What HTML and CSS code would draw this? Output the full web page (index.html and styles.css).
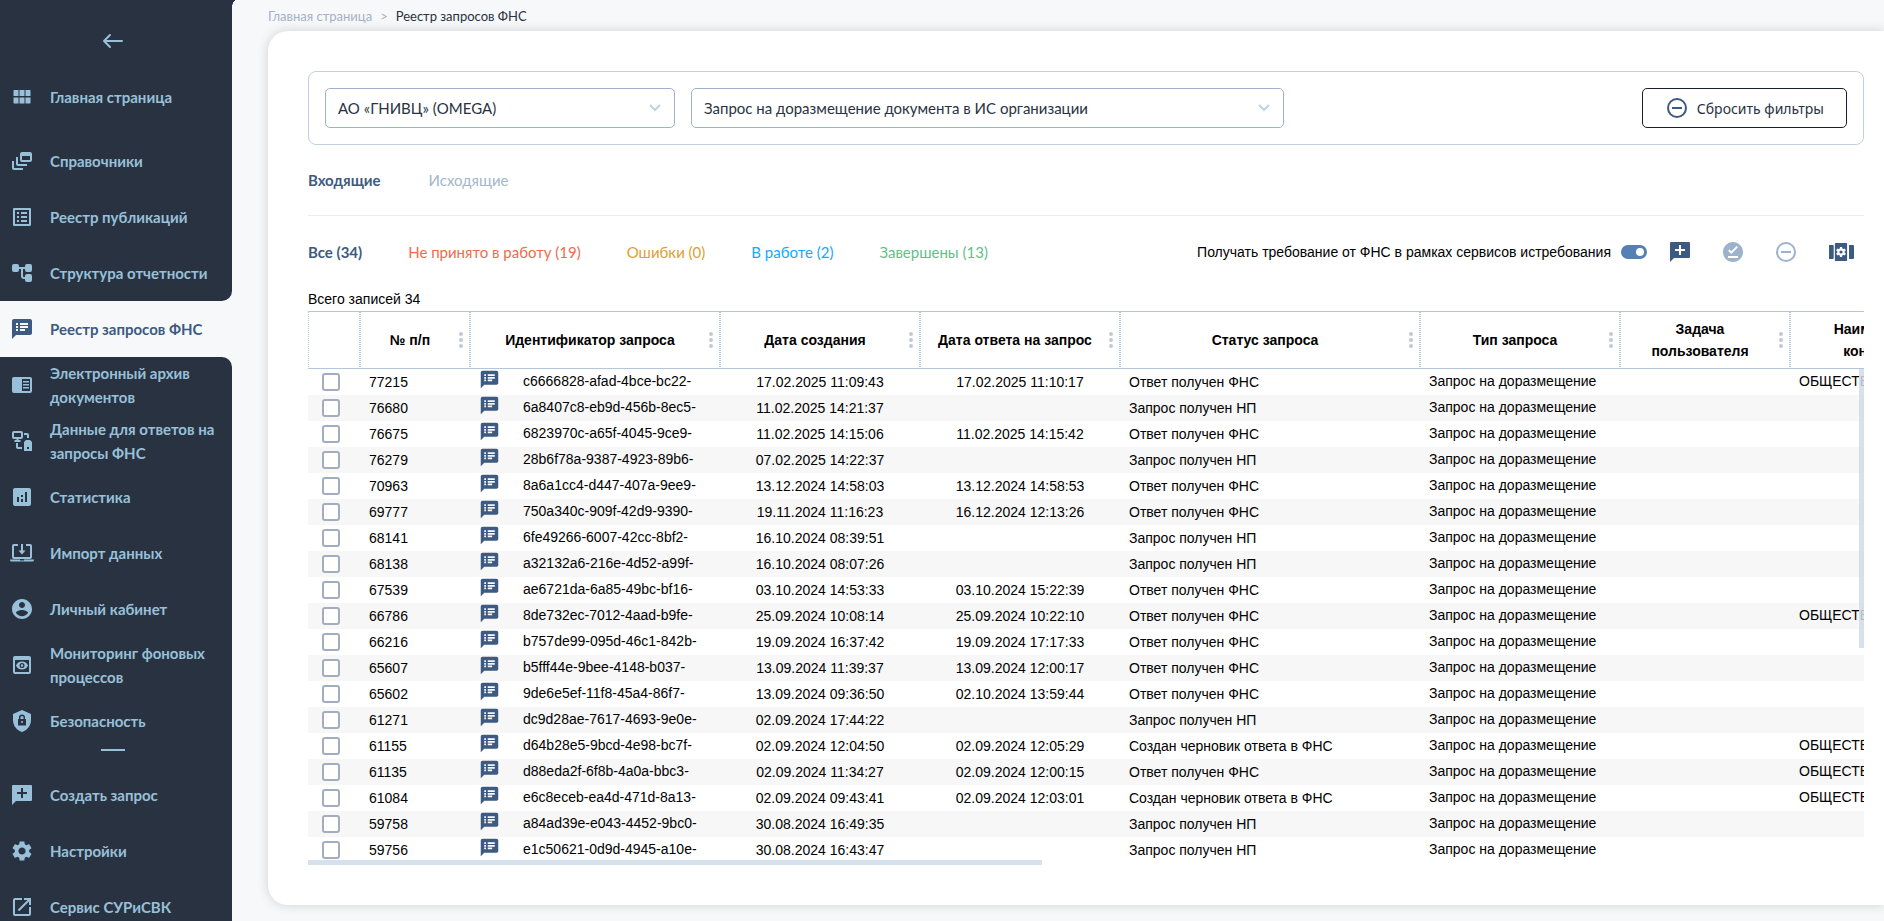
FILE: index.html
```html
<!DOCTYPE html>
<html lang="ru">
<head>
    <meta charset="UTF-8">
    <meta name="viewport" content="width=device-width, initial-scale=1.0">
    <title>Реестр запросов ФНС</title>
    <link rel="stylesheet" href="styles.css">
</head>
<body>
    <!-- Icon sprite -->
    <svg class="sprite" aria-hidden="true">
        <symbol id="i-back" viewBox="0 0 24 24"><path d="M21 12H3M9 6l-6 6 6 6" fill="none" stroke="currentColor" stroke-width="2" stroke-linecap="round" stroke-linejoin="round"/></symbol>
        <symbol id="i-grid" viewBox="0 0 24 24"><path d="M4 5h4.500v6H3.500V5.500zM9.500 5h5v6h-5zM15.500 5h4.500l.5.5V11h-5zM3.500 12.500h5v6H4l-.5-.5zM9.500 12.500h5v6h-5zM15.500 12.500h5V18l-.5.5h-4.500z"/></symbol>
        <symbol id="i-feed" viewBox="0 0 24 24"><path d="M8 8H6v7c0 1.100.9 2 2 2h9v-2H8V8zM20 3h-8c-1.100 0-2 .9-2 2v6c0 1.100.9 2 2 2h8c1.100 0 2-.9 2-2V5c0-1.100-.9-2-2-2zm0 8h-8V7h8v4zM4 12H2v7c0 1.100.9 2 2 2h9v-2H4v-7z"/></symbol>
        <symbol id="i-list" viewBox="0 0 24 24"><path d="M19 5v14H5V5h14m1.100-2H3.900c-.5 0-.9.4-.9.9v16.200c0 .4.4.9.9.9h16.200c.4 0 .9-.5.9-.9V3.900c0-.5-.5-.9-.9-.9zM11 7h6v2h-6V7zm0 4h6v2h-6v-2zm0 4h6v2h-6zM7 7h2v2H7zm0 4h2v2H7zm0 4h2v2H7z"/></symbol>
        <symbol id="i-tree" viewBox="0 0 24 24"><rect x="2" y="3" width="7" height="8" rx="2"/><rect x="15" y="3" width="7" height="8" rx="2"/><rect x="15" y="13" width="7" height="8" rx="2"/><path d="M8 7h8M12 7v8a2 2 0 0 0 2 2h2" fill="none" stroke="currentColor" stroke-width="2"/></symbol>
        <symbol id="i-notes" viewBox="0 0 24 24"><path d="M20 2H4c-1.100 0-2 .9-2 2v18l4-4h14c1.100 0 2-.9 2-2V4c0-1.100-.9-2-2-2zM8 14H6v-2h2v2zm0-3H6V9h2v2zm0-3H6V6h2v2zm7 6h-5v-2h5v2zm3-3h-8V9h8v2zm0-3h-8V6h8v2z"/></symbol>
        <symbol id="i-reader" viewBox="0 0 24 24"><path d="M20 4H4a2 2 0 0 0-2 2v12a2 2 0 0 0 2 2h16a2 2 0 0 0 2-2V6a2 2 0 0 0-2-2zm0 14h-8V6h8zM13 8h6v1.500h-6zM13 11h6v1.500h-6zM13 14h6v1.500h-6z"/></symbol>
        <symbol id="i-devices" viewBox="0 0 24 24"><g fill="none" stroke="currentColor" stroke-width="2"><rect x="3" y="3" width="9" height="6" rx="1"/><path d="M7.500 9v3M4.500 12h6M14 5h3a1 1 0 0 1 1 1v3M7 14v4a1 1 0 0 0 1 1h4"/></g><path fill-rule="evenodd" d="M14 22V13l2-2h4l2 2v9zM17 18v2h2v-2z"/></symbol>
        <symbol id="i-stat" viewBox="0 0 24 24"><path d="M19 3H5c-1.100 0-2 .9-2 2v14c0 1.100.9 2 2 2h14c1.100 0 2-.9 2-2V5c0-1.100-.9-2-2-2zM9 17H7v-5h2v5zm4 0h-2v-3h2v3zm0-5h-2v-2h2v2zm4 5h-2V7h2v10z"/></symbol>
        <symbol id="i-import" viewBox="0 0 24 24"><g fill="none" stroke="currentColor" stroke-width="2"><path d="M8 4H4a1 1 0 0 0-1 1v11a1 1 0 0 0 1 1h16a1 1 0 0 0 1-1V5a1 1 0 0 0-1-1h-4M12 3v8"/></g><path d="M8.500 9.500h7L12 13.500zM0 18.500h10v1h4v-1h10v.5a1.500 1.500 0 0 1-1.500 1.500h-21A1.500 1.500 0 0 1 0 19z"/></symbol>
        <symbol id="i-user" viewBox="0 0 24 24"><path d="M12 2C6.480 2 2 6.480 2 12s4.480 10 10 10 10-4.480 10-10S17.520 2 12 2zm0 3c1.660 0 3 1.340 3 3s-1.340 3-3 3-3-1.340-3-3 1.340-3 3-3zm0 14.200c-2.500 0-4.710-1.280-6-3.220.03-1.990 4-3.080 6-3.080 1.990 0 5.970 1.090 6 3.080-1.290 1.940-3.500 3.220-6 3.220z"/></symbol>
        <symbol id="i-preview" viewBox="0 0 24 24"><path fill-rule="evenodd" d="M5 3h14a2 2 0 0 1 2 2v14a2 2 0 0 1-2 2H5a2 2 0 0 1-2-2V5a2 2 0 0 1 2-2zm0 4v12h14V7zM12 8.500c2.700 0 5 1.600 6 4-1 2.400-3.300 4-6 4s-5-1.600-6-4c1-2.400 3.300-4 6-4zm0 1.500a2.500 2.500 0 1 0 0 5 2.500 2.500 0 0 0 0-5zm0 1.300a1.200 1.200 0 1 1 0 2.400 1.200 1.200 0 0 1 0-2.400z"/></symbol>
        <symbol id="i-shield" viewBox="0 0 24 24"><path fill-rule="evenodd" d="M12 1l9 4v6c0 5.550-3.840 10.740-9 12-5.160-1.260-9-6.450-9-12V5zM8.500 10A.5.5 0 0 0 8 10.500v5.500a.5.5 0 0 0 .5.5h7a.5.5 0 0 0 .5-.5v-5.500a.5.5 0 0 0-.5-.5h-.5V8.500a3 3 0 0 0-6 0V10zm2 0V8.500a1.500 1.500 0 0 1 3 0V10zM12 12a1 1 0 1 1 0 2 1 1 0 0 1 0-2z"/></symbol>
        <symbol id="i-add" viewBox="0 0 24 24"><path d="M21 2H3a1 1 0 0 0-1 1v19l4-4h15a1 1 0 0 0 1-1V3a1 1 0 0 0-1-1zm-4 9h-4v4h-2v-4H7V9h4V5h2v4h4z"/></symbol>
        <symbol id="i-gear" viewBox="0 0 24 24"><path d="M19.140 12.940c.04-.3.06-.61.06-.94 0-.32-.02-.64-.07-.94l2.030-1.580c.18-.14.23-.41.12-.61l-1.920-3.320c-.12-.22-.37-.29-.59-.22l-2.390.96c-.5-.38-1.030-.7-1.620-.94l-.36-2.540c-.04-.24-.24-.41-.48-.41h-3.840c-.24 0-.43.17-.47.41l-.36 2.540c-.59.24-1.130.57-1.620.94l-2.390-.96c-.22-.08-.47 0-.59.22L2.740 8.870c-.12.21-.08.47.12.61l2.030 1.580c-.05.3-.09.63-.09.94s.02.64.07.94l-2.030 1.580c-.18.14-.23.41-.12.61l1.920 3.320c.12.22.37.29.59.22l2.390-.96c.5.38 1.030.7 1.620.94l.36 2.540c.05.24.24.41.48.41h3.840c.24 0 .44-.17.47-.41l.36-2.540c.59-.24 1.130-.56 1.620-.94l2.390.96c.22.08.47 0 .59-.22l1.920-3.320c.12-.22.07-.47-.12-.61l-2.010-1.580zM12 15.600c-1.980 0-3.600-1.620-3.600-3.600s1.620-3.600 3.600-3.600 3.600 1.620 3.600 3.600-1.620 3.600-3.600 3.600z"/></symbol>
        <symbol id="i-open" viewBox="0 0 24 24"><path d="M19 19H5V5h7V3H5c-1.110 0-2 .9-2 2v14c0 1.100.89 2 2 2h14c1.100 0 2-.9 2-2v-7h-2v7zM14 3v2h3.590l-9.830 9.830 1.410 1.410L19 6.410V10h2V3h-7z"/></symbol>
        <symbol id="i-minus" viewBox="0 0 24 24"><circle cx="12" cy="12" r="9" fill="none" stroke="currentColor" stroke-width="2"/><path d="M7 11h10v2H7z"/></symbol>
        <symbol id="i-done" viewBox="0 0 24 24"><path d="M12 2C6.480 2 2 6.480 2 12s4.480 10 10 10 10-4.480 10-10S17.520 2 12 2zm5 16H7v-2h10v2zm-6.700-4L7 10.700l1.400-1.400 1.900 1.900 5.300-5.300L17 7.300 10.300 14z"/></symbol>
        <symbol id="i-columns" viewBox="0 0 28 24"><path fill-rule="evenodd" d="M2 5h4a.7.7 0 0 1 .7.7v12.600a.7.7 0 0 1-.7.7H2zM22 5h4a1 1 0 0 1 1 1v12a1 1 0 0 1-1 1h-4zM8.500 3h11a.6.6 0 0 1 .6.6v16.800a.6.6 0 0 1-.6.6h-11a.6.6 0 0 1-.6-.6V3.600a.6.6 0 0 1 .6-.6z"/><g class="cut"><circle cx="14" cy="12" r="3.700"/><path d="M12.900 7h2.200v10h-2.200zM9.100 10.500l1.100-1.900 8.700 5-1.100 1.900zM9.100 13.600l8.700-5 1.100 1.900-8.700 5z"/></g><circle cx="14" cy="12" r="1.600"/></symbol>
        <symbol id="i-more" viewBox="0 0 4 16"><circle cx="2" cy="2" r="2"/><circle cx="2" cy="8" r="2"/><circle cx="2" cy="14" r="2"/></symbol>
    </svg>

    <div class="layout">
        <aside class="sidebar">
            <div class="sidebar-part sidebar-top">
                <button class="back" type="button" aria-label="Свернуть меню"><svg><use href="#i-back"/></svg></button>
                <a class="nav-item nav-home" href="#"><svg><use href="#i-grid"/></svg><span>Главная страница</span></a>
                <a class="nav-item" href="#"><svg><use href="#i-feed"/></svg><span>Справочники</span></a>
                <a class="nav-item" href="#"><svg><use href="#i-list"/></svg><span>Реестр публикаций</span></a>
                <a class="nav-item" href="#"><svg><use href="#i-tree"/></svg><span>Структура отчетности</span></a>
            </div>
            <a class="nav-item active" href="#"><svg><use href="#i-notes"/></svg><span>Реестр запросов ФНС</span></a>
            <div class="sidebar-part sidebar-bottom">
                <a class="nav-item" href="#"><svg><use href="#i-reader"/></svg><span>Электронный архив документов</span></a>
                <a class="nav-item" href="#"><svg><use href="#i-devices"/></svg><span>Данные для ответов на запросы ФНС</span></a>
                <a class="nav-item" href="#"><svg><use href="#i-stat"/></svg><span>Статистика</span></a>
                <a class="nav-item" href="#"><svg><use href="#i-import"/></svg><span>Импорт данных</span></a>
                <a class="nav-item" href="#"><svg><use href="#i-user"/></svg><span>Личный кабинет</span></a>
                <a class="nav-item" href="#"><svg><use href="#i-preview"/></svg><span>Мониторинг фоновых процессов</span></a>
                <a class="nav-item" href="#"><svg><use href="#i-shield"/></svg><span>Безопасность</span></a>
                <hr class="nav-line">
                <a class="nav-item" href="#"><svg><use href="#i-add"/></svg><span>Создать запрос</span></a>
                <a class="nav-item" href="#"><svg><use href="#i-gear"/></svg><span>Настройки</span></a>
                <a class="nav-item" href="#"><svg><use href="#i-open"/></svg><span>Сервис СУРиСВК</span></a>
            </div>
        </aside>

        <main class="main">
            <nav class="breadcrumbs">
                <a href="#">Главная страница</a>
                <span class="sep">&gt;</span>
                <span class="current">Реестр запросов ФНС</span>
            </nav>

            <section class="card">
                <div class="filters">
                    <div class="select select-org">
                        <select aria-label="Организация">
                            <option>АО «ГНИВЦ» (OMEGA)</option>
                        </select>
                        <svg class="chevron" viewBox="0 0 12 8"><path d="M1 1l5 5 5-5"/></svg>
                    </div>
                    <div class="select select-type">
                        <select aria-label="Тип запроса">
                            <option>Запрос на доразмещение документа в ИС организации</option>
                        </select>
                        <svg class="chevron" viewBox="0 0 12 8"><path d="M1 1l5 5 5-5"/></svg>
                    </div>
                    <button class="reset" type="button"><svg><use href="#i-minus"/></svg>Сбросить фильтры</button>
                </div>

                <div class="tabs">
                    <a class="selected" href="#">Входящие</a>
                    <a href="#">Исходящие</a>
                </div>

                <div class="toolbar">
                    <div class="statuses">
                        <a class="selected" href="#">Все (34)</a>
                        <a class="red" href="#">Не принято в работу (19)</a>
                        <a class="yellow" href="#">Ошибки (0)</a>
                        <a class="blue" href="#">В работе (2)</a>
                        <a class="green" href="#">Завершены (13)</a>
                    </div>
                    <div class="actions">
                        <label for="auto-receive">Получать требование от ФНС в рамках сервисов истребования</label>
                        <input class="toggle" type="checkbox" id="auto-receive" checked>
                        <div class="action-buttons">
                            <button type="button" aria-label="Создать запрос"><svg><use href="#i-add"/></svg></button>
                            <button type="button" aria-label="Принять" disabled><svg><use href="#i-done"/></svg></button>
                            <button type="button" aria-label="Отклонить" disabled><svg><use href="#i-minus"/></svg></button>
                            <button type="button" aria-label="Настройка столбцов"><svg class="wide"><use href="#i-columns"/></svg></button>
                        </div>
                    </div>
                </div>

                <div class="total">Всего записей 34</div>

                <div class="table-box">
                    <table>
                        <colgroup>
                            <col class="c-check"><col class="c-num"><col class="c-id"><col class="c-date"><col class="c-date">
                            <col class="c-status"><col class="c-type"><col class="c-task"><col class="c-name">
                        </colgroup>
                        <thead>
                            <tr id="table-head"></tr>
                        </thead>
                        <tbody id="table-body"></tbody>
                    </table>
                    <div class="scroll-y"></div>
                    <div class="scroll-x"></div>
                </div>
            </section>
        </main>
    </div>

    <script>
        const columns = ['', '№ п/п', 'Идентификатор запроса', 'Дата создания', 'Дата ответа на запрос', 'Статус запроса', 'Тип запроса', 'Задача пользователя', 'Наименование контрагента'];

        const DONE = 'Ответ получен ФНС';
        const NEW = 'Запрос получен НП';
        const DRAFT = 'Создан черновик ответа в ФНС';

        // number, id, created, answered, status, has contractor
        const rows = [
            ['77215', 'c6666828-afad-4bce-bc22-', '17.02.2025 11:09:43', '17.02.2025 11:10:17', DONE, true],
            ['76680', '6a8407c8-eb9d-456b-8ec5-', '11.02.2025 14:21:37', '', NEW],
            ['76675', '6823970c-a65f-4045-9ce9-', '11.02.2025 14:15:06', '11.02.2025 14:15:42', DONE],
            ['76279', '28b6f78a-9387-4923-89b6-', '07.02.2025 14:22:37', '', NEW],
            ['70963', '8a6a1cc4-d447-407a-9ee9-', '13.12.2024 14:58:03', '13.12.2024 14:58:53', DONE],
            ['69777', '750a340c-909f-42d9-9390-', '19.11.2024 11:16:23', '16.12.2024 12:13:26', DONE],
            ['68141', '6fe49266-6007-42cc-8bf2-', '16.10.2024 08:39:51', '', NEW],
            ['68138', 'a32132a6-216e-4d52-a99f-', '16.10.2024 08:07:26', '', NEW],
            ['67539', 'ae6721da-6a85-49bc-bf16-', '03.10.2024 14:53:33', '03.10.2024 15:22:39', DONE],
            ['66786', '8de732ec-7012-4aad-b9fe-', '25.09.2024 10:08:14', '25.09.2024 10:22:10', DONE, true],
            ['66216', 'b757de99-095d-46c1-842b-', '19.09.2024 16:37:42', '19.09.2024 17:17:33', DONE],
            ['65607', 'b5fff44e-9bee-4148-b037-', '13.09.2024 11:39:37', '13.09.2024 12:00:17', DONE],
            ['65602', '9de6e5ef-11f8-45a4-86f7-', '13.09.2024 09:36:50', '02.10.2024 13:59:44', DONE],
            ['61271', 'dc9d28ae-7617-4693-9e0e-', '02.09.2024 17:44:22', '', NEW],
            ['61155', 'd64b28e5-9bcd-4e98-bc7f-', '02.09.2024 12:04:50', '02.09.2024 12:05:29', DRAFT, true],
            ['61135', 'd88eda2f-6f8b-4a0a-bbc3-', '02.09.2024 11:34:27', '02.09.2024 12:00:15', DONE, true],
            ['61084', 'e6c8eceb-ea4d-471d-8a13-', '02.09.2024 09:43:41', '02.09.2024 12:03:01', DRAFT, true],
            ['59758', 'a84ad39e-e043-4452-9bc0-', '30.08.2024 16:49:35', '', NEW],
            ['59756', 'e1c50621-0d9d-4945-a10e-', '30.08.2024 16:43:47', '', NEW]
        ];

        document.getElementById('table-head').innerHTML = columns.map(title => title
            ? `<th><div class="th"><span>${title}</span><svg class="more"><use href="#i-more"/></svg></div></th>`
            : '<th></th>').join('');

        document.getElementById('table-body').innerHTML = rows.map(([num, id, created, answered, status, named]) => `
            <tr>
                <td class="check"><input type="checkbox" aria-label="Выбрать ${num}"></td>
                <td>${num}</td>
                <td><div class="id-cell"><svg><use href="#i-notes"/></svg><span>${id}</span></div></td>
                <td class="date">${created}</td>
                <td class="date">${answered}</td>
                <td>${status}</td>
                <td class="upper">Запрос на доразмещение</td>
                <td></td>
                <td class="upper">${named ? 'ОБЩЕСТВО' : ''}</td>
            </tr>`).join('');
    </script>
</body>
</html>
```

FILE: styles.css
```css
* {
    box-sizing: border-box;
}

body {
    margin: 0;
    background-color: #f7f8fa;
    color: #000;
    font-family: "Liberation Sans", Arial, sans-serif;
    font-size: 14px;
    overflow: hidden;
}

a {
    text-decoration: none;
    color: inherit;
}

button {
    font: inherit;
    cursor: pointer;
}

svg {
    fill: currentColor;
    flex: none;
}

.sprite {
    display: none;
}

.layout {
    display: flex;
    height: 100vh;
}

/* Sidebar */
.sidebar {
    width: 232px;
    flex: none;
    display: flex;
    flex-direction: column;
    color: #98c1d9;
    font-family: Lato, sans-serif;
    font-weight: 700;
    font-size: 15px;
    line-height: 24px;
}

.sidebar-part {
    flex: none;
    background-color: #293241;
}

.sidebar-top {
    position: relative;
    border-radius: 0 0 10px 0;
}

/* rounded corner where the sidebar meets the content */
.sidebar-top::after {
    content: "";
    position: absolute;
    top: 0;
    left: 100%;
    width: 4px;
    height: 8px;
    background: radial-gradient(4px 8px at 100% 100%, transparent 96%, #293241);
}

.sidebar-bottom {
    border-radius: 0 10px 0 0;
}

.back {
    display: block;
    margin: 0 auto;
    padding: 29px 6px 16px 0;
    border: none;
    background: none;
    color: inherit;
}

.back svg {
    display: block;
    width: 24px;
    height: 24px;
}

.nav-item {
    display: flex;
    flex: none;
    align-items: center;
    gap: 16px;
    height: 56px;
    padding: 0 10px;
}

.nav-item svg {
    width: 24px;
    height: 24px;
}

.nav-home {
    margin-bottom: 8px;
}

.nav-item.active {
    color: #3d5a80;
}

.nav-line {
    width: 24px;
    height: 2px;
    margin: 0 0 16px 101px;
    border: none;
    background-color: #98c1d9;
}

/* Main area */
.main {
    flex: 1;
    min-width: 0;
    display: flex;
    flex-direction: column;
    padding: 0 0 16px 36px;
    font-family: Lato, sans-serif;
}

.breadcrumbs {
    display: flex;
    gap: 8px;
    height: 31px;
    align-items: center;
    font-size: 13px;
    color: #a3b1c6;
}

.breadcrumbs .current {
    color: #293241;
}

.card {
    flex: 1;
    min-height: 0;
    display: flex;
    flex-direction: column;
    padding: 40px 20px 40px 40px;
    background-color: #fff;
    border-radius: 20px 0 0 20px;
    box-shadow: 0 0 12px rgba(0, 0, 0, 0.16);
}

.filters {
    display: flex;
    gap: 16px;
    padding: 16px;
    border: 1px solid #c2d0df;
    border-radius: 8px;
}

.select {
    position: relative;
}

.select-org {
    width: 350px;
}

.select-type {
    width: 593px;
}

.select select {
    width: 100%;
    height: 40px;
    padding: 0 36px 0 12px;
    border: 1px solid #9db2cb;
    border-radius: 5px;
    background-color: #fff;
    color: #293241;
    font-family: Lato, sans-serif;
    font-size: 15px;
    appearance: none;
}

.chevron {
    position: absolute;
    right: 14px;
    top: 16px;
    width: 12px;
    height: 8px;
    fill: none;
    stroke: #c2d0df;
    stroke-width: 2;
    pointer-events: none;
}

.reset {
    display: flex;
    align-items: center;
    gap: 8px;
    height: 40px;
    margin-left: auto;
    padding: 0 22px;
    border: 1px solid #1b1f2a;
    border-radius: 5px;
    background-color: #fff;
    color: #293241;
    font-family: "Noto Sans", sans-serif;
    font-size: 14px;
}

.reset svg {
    width: 24px;
    height: 24px;
    color: #3d5a80;
}

.tabs {
    display: flex;
    gap: 48px;
    padding: 23px 0;
    border-bottom: 1px solid #e9ebee;
    color: #a3b6cb;
    font-size: 15px;
    line-height: 24px;
}

.tabs .selected,
.statuses .selected {
    color: #3d5a80;
    font-weight: 700;
}

.toolbar {
    display: flex;
    justify-content: space-between;
    align-items: center;
    height: 72px;
}

.statuses {
    display: flex;
    gap: 46px;
    font-size: 15px;
}

.red {
    color: #ee6c4d;
}

.yellow {
    color: #e0a030;
}

.blue {
    color: #14a8ff;
}

.green {
    color: #5fbf87;
}

.actions {
    display: flex;
    align-items: center;
    gap: 10px;
    padding-right: 9px;
    font-family: "Liberation Sans", Arial, sans-serif;
}

.toggle {
    appearance: none;
    display: flex;
    justify-content: flex-end;
    align-items: center;
    width: 26px;
    height: 14px;
    margin: 0 11px 0 0;
    padding: 3px;
    border-radius: 7px;
    background-color: #5480b5;
}

.toggle::before {
    content: "";
    width: 8px;
    height: 8px;
    border-radius: 50%;
    background-color: #fff;
}

.action-buttons {
    display: flex;
    gap: 29px;
}

.action-buttons button {
    padding: 0;
    border: none;
    background: none;
    color: #3d5a80;
}

.action-buttons button:disabled {
    color: #9db2cb;
}

.action-buttons svg {
    display: block;
    width: 24px;
    height: 24px;
}

.action-buttons .wide {
    width: 28px;
}

.cut {
    fill: #fff;
}

.total {
    height: 23px;
    line-height: 22px;
    font-family: "Liberation Sans", Arial, sans-serif;
}

/* Table */
.table-box {
    position: relative;
    flex: 1;
    min-height: 0;
    overflow: hidden;
    font-family: "Liberation Sans", Arial, sans-serif;
}

table {
    table-layout: fixed;
    width: 1682px;
    border-collapse: separate;
    border-spacing: 0;
}

.c-check { width: 52px; }
.c-num { width: 110px; }
.c-id { width: 250px; }
.c-date { width: 200px; }
.c-status { width: 300px; }
.c-type { width: 200px; }
.c-task { width: 170px; }
.c-name { width: 200px; }

th {
    height: 58px;
    padding: 0 6px 0 0;
    border: 1px dotted #b4c6da;
    border-top-style: solid;
    border-bottom-style: solid;
    line-height: 22px;
}

.th {
    display: flex;
    align-items: center;
}

.th span {
    flex: 1;
    padding: 0 12px;
}

.more {
    width: 4px;
    height: 16px;
    color: #c1c8d6;
}

td {
    height: 26px;
    padding: 0 9px;
    line-height: 26px;
    white-space: nowrap;
}

tbody tr:nth-child(even) {
    background-color: #f7f7f7;
}

.check {
    padding: 0 14px;
}

.check input {
    appearance: none;
    display: block;
    width: 18px;
    height: 18px;
    margin: 0;
    border: 2px solid #a2adc0;
    border-radius: 3px;
    background-color: #fff;
}

.date {
    text-align: center;
}

.id-cell {
    display: flex;
    gap: 23px;
    height: 26px;
    line-height: 24px;
}

.id-cell svg {
    width: 21px;
    height: 21px;
    color: #3d5a80;
}

.upper {
    padding-bottom: 2px;
    line-height: 24px;
}

.scroll-y,
.scroll-x {
    position: absolute;
    background-color: rgba(208, 220, 232, 0.85);
}

.scroll-y {
    top: 58px;
    right: 0;
    width: 5px;
    height: 279px;
}

.scroll-x {
    left: 0;
    bottom: 0;
    width: 734px;
    height: 5px;
}
```
